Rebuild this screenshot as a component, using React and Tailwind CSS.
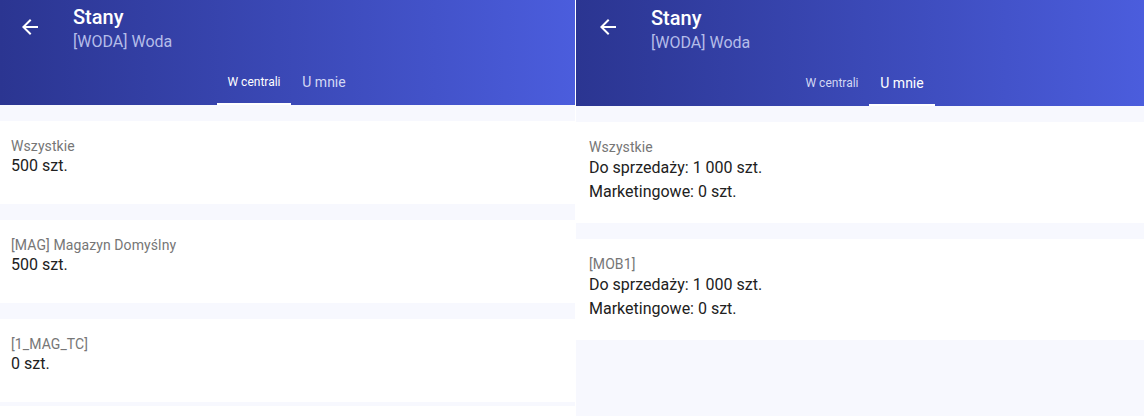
import React from "react";

const BackArrow = () => (
  <svg width="24" height="24" viewBox="0 0 24 24" fill="#ffffff">
    <path d="M20 11H7.83l5.59-5.59L12 4l-8 8 8 8 1.41-1.41L7.83 13H20v-2z" />
  </svg>
);

const Tabs = ({ active, offset }) => (
  <div className={`mt-auto flex h-[40px] ${offset}`}>
    <div className="flex w-[74px] flex-col items-center">
      <span
        className={`pt-[9px] text-[12px] leading-[16px] ${
          active === 0 ? "text-white" : "text-[#d3d8f4]"
        }`}
      >
        W centrali
      </span>
      <div className={`mt-auto h-[2px] w-full ${active === 0 ? "bg-white" : ""}`} />
    </div>
    <div className="flex w-[66px] flex-col items-center">
      <span
        className={`pt-[8px] text-[14px] leading-[18px] ${
          active === 1 ? "text-white" : "text-[#d3d8f4]"
        }`}
      >
        U mnie
      </span>
      <div className={`mt-auto h-[2px] w-full ${active === 1 ? "bg-white" : ""}`} />
    </div>
  </div>
);

const Header = ({ active, height, arrowPad, titleTop, tabOffset }) => (
  <div
    className={`flex flex-col bg-gradient-to-r from-[#2b3591] to-[#4b5ddd] ${height}`}
  >
    <div className="flex">
      <div className={`pt-[15px] ${arrowPad}`}>
        <BackArrow />
      </div>
      <div className={`flex flex-col pl-[31px] ${titleTop}`}>
        <span className="text-[20px] font-medium leading-[24px] text-white">Stany</span>
        <span className="mt-[3px] text-[16px] leading-[20px] text-[#b5bde9]">[WODA] Woda</span>
      </div>
    </div>
    <Tabs active={active} offset={tabOffset} />
  </div>
);

const leftItems = [
  { label: "Wszystkie", value: "500 szt." },
  { label: "[MAG] Magazyn Domyślny", value: "500 szt." },
  { label: "[1_MAG_TC]", value: "0 szt." },
];

const rightItems = [
  { label: "Wszystkie", sale: "1 000", marketing: "0" },
  { label: "[MOB1]", sale: "1 000", marketing: "0" },
];

const App = () => {
  return (
    <div className="flex h-[416px] w-[1144px] overflow-hidden bg-white font-['Roboto',sans-serif]">
      {/* W centrali */}
      <div className="flex w-[575px] flex-col">
        <Header
          active={0}
          height="h-[105px]"
          arrowPad="pl-[18px]"
          titleTop="pt-[5px]"
          tabOffset="ml-[217px]"
        />
        <div className="flex flex-1 flex-col gap-4 bg-[#f7f8fe] pt-4">
          {leftItems.map((item) => (
            <div key={item.label} className="h-[83px] bg-white pl-[11px] pt-4">
              <p className="text-[14px] leading-[18px] tracking-[0.1px] text-[#767676]">
                {item.label}
              </p>
              <p className="text-[16px] leading-[21px] text-[#212121]">{item.value}</p>
            </div>
          ))}
          <div className="-mt-3 flex-1 bg-white" />
        </div>
      </div>

      <div className="w-px bg-white" />

      {/* U mnie */}
      <div className="flex flex-1 flex-col">
        <Header
          active={1}
          height="h-[106px]"
          arrowPad="pl-[20px]"
          titleTop="pt-[6px]"
          tabOffset="ml-[219px]"
        />
        <div className="flex flex-1 flex-col gap-4 bg-[#f7f8fe] pt-4">
          {rightItems.map((item) => (
            <div key={item.label} className="h-[101px] bg-white pl-[13px] pt-[16px]">
              <p className="text-[14px] leading-[18px] tracking-[0.1px] text-[#767676]">
                {item.label}
              </p>
              <p className="text-[16px] leading-6 text-[#212121]">
                Do sprzedaży: {item.sale} szt.
              </p>
              <p className="text-[16px] leading-6 text-[#212121]">
                Marketingowe: {item.marketing} szt.
              </p>
            </div>
          ))}
        </div>
      </div>
    </div>
  );
};

export default App;
